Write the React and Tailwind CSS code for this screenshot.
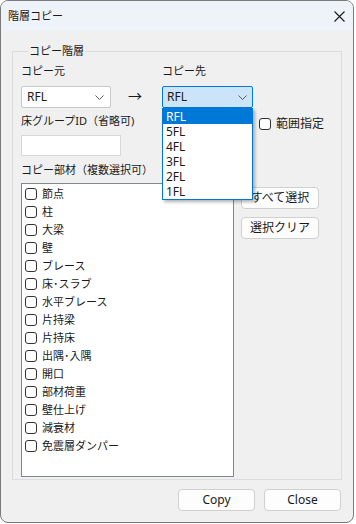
import { useState } from 'react';

const FONT = "font-['Noto_Sans','Noto_Sans_CJK_JP',sans-serif]";

const FLOORS = ['RFL', '5FL', '4FL', '3FL', '2FL', '1FL'];

const MEMBERS = [
  '節点',
  '柱',
  '大梁',
  '壁',
  'ブレース',
  '床･スラブ',
  '水平ブレース',
  '片持梁',
  '片持床',
  '出隅･入隅',
  '開口',
  '部材荷重',
  '壁仕上げ',
  '減衰材',
  '免震層ダンパー',
];

function Chevron() {
  return (
    <svg width="9" height="5" viewBox="0 0 9 5" fill="none" stroke="#5a5a5a" strokeWidth="1">
      <path d="M0.5 0.5 L4.5 4.5 L8.5 0.5" />
    </svg>
  );
}

function Box({ checked }) {
  return (
    <span className="w-[12px] h-[12px] rounded-[3px] border border-[#333] bg-white shrink-0 flex items-center justify-center">
      {checked && (
        <svg width="8" height="8" viewBox="0 0 8 8" fill="none" stroke="#333" strokeWidth="1.2">
          <path d="M1 4 L3 6 L7 1.5" />
        </svg>
      )}
    </span>
  );
}

function WinButton({ children, className = '' }) {
  return (
    <button
      className={`h-[22px] rounded-[4px] border border-[#d0d0d0] bg-[#fdfdfd] text-[12px] leading-none text-[#1a1a1a] ${className}`}
    >
      {children}
    </button>
  );
}

export default function App() {
  const [checked, setChecked] = useState({});
  const [range, setRange] = useState(false);

  return (
    <div className={`w-[356px] h-[524px] bg-white ${FONT}`}>
      <div className="w-[354px] h-[523px] border border-[#7a7a7a] rounded-[8px] overflow-hidden bg-[#f0f0f0] flex flex-col">
        <div className="h-[30px] bg-[#eef2f9] flex items-center justify-between pl-[7px] pr-[8px] shrink-0">
          <span className="text-[11px] text-[#1a1a1a]">階層コピー</span>
          <svg width="11" height="11" viewBox="0 0 11 11" stroke="#1a1a1a" strokeWidth="1.1">
            <path d="M0.5 0.5 L10.5 10.5 M10.5 0.5 L0.5 10.5" />
          </svg>
        </div>

        <div className="flex-1 flex flex-col px-[11px] pt-[12px]">
          <fieldset className="border border-[#dcdcdc] pl-[8px] pr-[8px] pb-[2px] text-[11px] text-[#1a1a1a]">
            <legend className="ml-[7px] px-[1px] leading-[16px]">コピー階層</legend>

            <div className="flex mt-[4px]">
              <div className="flex flex-col">
                <span className="leading-[16px]">コピー元</span>
                <div className="mt-[7px] w-[90px] h-[22px] border border-[#c8c8c8] rounded-[2px] bg-white flex items-center justify-between pl-[5px] pr-[6px]">
                  <span className="text-[12px]">RFL</span>
                  <Chevron />
                </div>
              </div>
              <span className="mt-[25px] ml-[17px] w-[34px] text-[14px] leading-[16px]">→</span>
              <div className="flex flex-col relative">
                <span className="leading-[16px]">コピー先</span>
                <div className="mt-[7px] w-[91px] h-[22px] border border-[#0078d7] rounded-[2px] bg-[#cce4f7] flex items-center justify-between pl-[4px] pr-[5px]">
                  <span className="text-[12px]">RFL</span>
                  <Chevron />
                </div>
                <div className="absolute left-0 top-[45px] w-[91px] border border-[#0078d7] bg-white shadow-[2px_2px_3px_rgba(0,0,0,0.3)] z-10">
                  {FLOORS.map((f, i) => (
                    <div
                      key={f}
                      className={`h-[15px] pl-[3px] text-[12px] leading-[15px] ${i === 0 ? 'bg-[#0078d7] text-white' : 'text-[#1a1a1a]'}`}
                    >
                      {f}
                    </div>
                  ))}
                </div>
              </div>
            </div>

            <div className="flex mt-[5px]">
              <div className="flex flex-col items-start w-[238px]">
                <span className="leading-[16px]">床グループID（省略可)</span>
                <div className="mt-[6px] w-[100px] h-[21px] border border-[#d8d8d8] bg-white" />
              </div>
              <label className="flex items-center gap-[5px] h-[24px] -mt-[1px]" onClick={() => setRange(!range)}>
                <Box checked={range} />
                <span className="text-[12px]">範囲指定</span>
              </label>
            </div>

            <span className="inline-block mt-[6px] leading-[16px]">コピー部材（複数選択可）</span>

            <div className="flex mt-[4px] gap-[7px]">
              <div className="w-[213px] h-[294px] border border-[#828790] bg-white pt-[1px] pl-[3px]">
                {MEMBERS.map((m) => (
                  <div
                    key={m}
                    className="h-[18px] flex items-center gap-[5px]"
                    onClick={() => setChecked({ ...checked, [m]: !checked[m] })}
                  >
                    <Box checked={checked[m]} />
                    <span className="text-[11px] leading-none">{m}</span>
                  </div>
                ))}
              </div>
              <div className="flex flex-col gap-[8px] pt-[4px]">
                <WinButton className="w-[78px]">すべて選択</WinButton>
                <WinButton className="w-[78px]">選択クリア</WinButton>
              </div>
            </div>
          </fieldset>

          <div className="flex justify-end gap-[9px] mt-[9px] pr-[1px]">
            <WinButton className="w-[77px]">Copy</WinButton>
            <WinButton className="w-[77px]">Close</WinButton>
          </div>
        </div>
      </div>
    </div>
  );
}
